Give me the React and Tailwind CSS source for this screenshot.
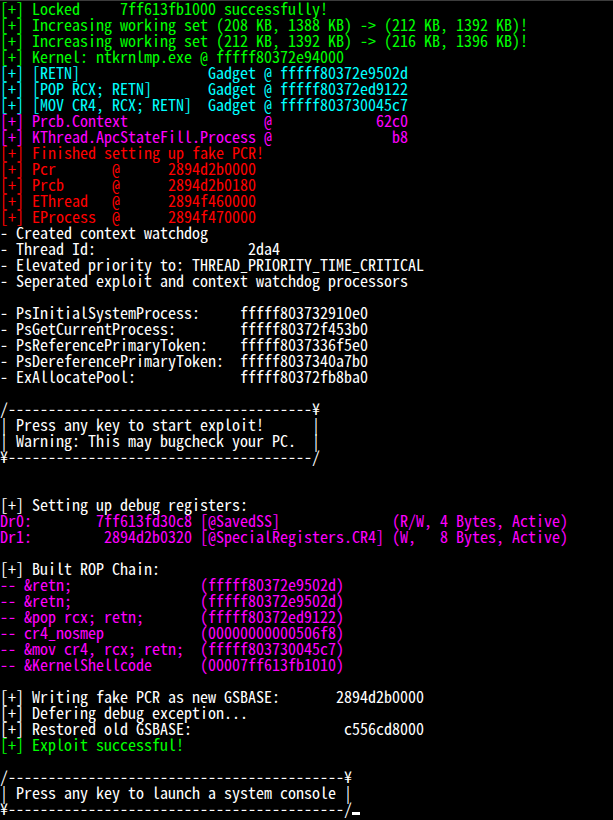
import React from "react";

const C = {
  g: "text-[#00ff00]",
  c: "text-[#00ffff]",
  m: "text-[#ff00ff]",
  r: "text-[#ff0000]",
  w: "text-[#ffffff]",
};

const dash38 = "-".repeat(38);
const dash42 = "-".repeat(42);

const lines = [
  ["g", "[+] Locked     7ff613fb1000 successfully!"],
  ["g", "[+] Increasing working set (208 KB, 1388 KB) -> (212 KB, 1392 KB)!"],
  ["g", "[+] Increasing working set (212 KB, 1392 KB) -> (216 KB, 1396 KB)!"],
  ["g", "[+] Kernel: ntkrnlmp.exe @ fffff80372e94000"],
  ["c", "[+] [RETN]                Gadget @ fffff80372e9502d"],
  ["c", "[+] [POP RCX; RETN]       Gadget @ fffff80372ed9122"],
  ["c", "[+] [MOV CR4, RCX; RETN]  Gadget @ fffff803730045c7"],
  ["m", "[+] Prcb.Context                 @             62c0"],
  ["m", "[+] KThread.ApcStateFill.Process @               b8"],
  ["r", "[+] Finished setting up fake PCR!"],
  ["r", "[+] Pcr       @      2894d2b0000"],
  ["r", "[+] Prcb      @      2894d2b0180"],
  ["r", "[+] EThread   @      2894f460000"],
  ["r", "[+] EProcess  @      2894f470000"],
  ["w", "- Created context watchdog"],
  ["w", "- Thread Id:                   2da4"],
  ["w", "- Elevated priority to: THREAD_PRIORITY_TIME_CRITICAL"],
  ["w", "- Seperated exploit and context watchdog processors"],
  ["w", ""],
  ["w", "- PsInitialSystemProcess:     fffff803732910e0"],
  ["w", "- PsGetCurrentProcess:        fffff80372f453b0"],
  ["w", "- PsReferencePrimaryToken:    fffff8037336f5e0"],
  ["w", "- PsDereferencePrimaryToken:  fffff8037340a7b0"],
  ["w", "- ExAllocatePool:             fffff80372fb8ba0"],
  ["w", ""],
  ["w", "/" + dash38 + "¥"],
  ["w", "| Press any key to start exploit!      |"],
  ["w", "| Warning: This may bugcheck your PC.  |"],
  ["w", "¥" + dash38 + "/"],
  ["w", ""],
  ["w", ""],
  ["w", "[+] Setting up debug registers:"],
  ["m", "Dr0:        7ff613fd30c8 [@SavedSS]              (R/W, 4 Bytes, Active)"],
  ["m", "Dr1:         2894d2b0320 [@SpecialRegisters.CR4] (W,   8 Bytes, Active)"],
  ["w", ""],
  ["w", "[+] Built ROP Chain:"],
  ["m", "-- &retn;                (fffff80372e9502d)"],
  ["m", "-- &retn;                (fffff80372e9502d)"],
  ["m", "-- &pop rcx; retn;       (fffff80372ed9122)"],
  ["m", "-- cr4_nosmep            (00000000000506f8)"],
  ["m", "-- &mov cr4, rcx; retn;  (fffff803730045c7)"],
  ["m", "-- &KernelShellcode      (00007ff613fb1010)"],
  ["w", ""],
  ["w", "[+] Writing fake PCR as new GSBASE:       2894d2b0000"],
  ["w", "[+] Defering debug exception..."],
  ["w", "[+] Restored old GSBASE:                   c556cd8000"],
  ["g", "[+] Exploit successful!"],
  ["w", ""],
  ["w", "/" + dash42 + "¥"],
  ["w", "| Press any key to launch a system console |"],
  ["w", "¥" + dash42 + "/", true],
];

export default function App() {
  return (
    <div className="w-[613px] h-[820px] overflow-hidden bg-black border-t border-[#3c3c3c]">
      <div
        className="-mt-px flex flex-col text-[16px] leading-[16px] whitespace-pre"
        style={{ fontFamily: '"Noto Sans Mono CJK JP", "Noto Sans CJK JP", "Liberation Mono", monospace' }}
      >
        {lines.map(([col, text, cursor], i) => (
          <div key={i} className={`flex h-4 ${C[col]}`}>
            <span>{text}</span>
            {cursor && <span className="self-end mb-px h-[3px] w-2 bg-white" />}
          </div>
        ))}
      </div>
    </div>
  );
}
